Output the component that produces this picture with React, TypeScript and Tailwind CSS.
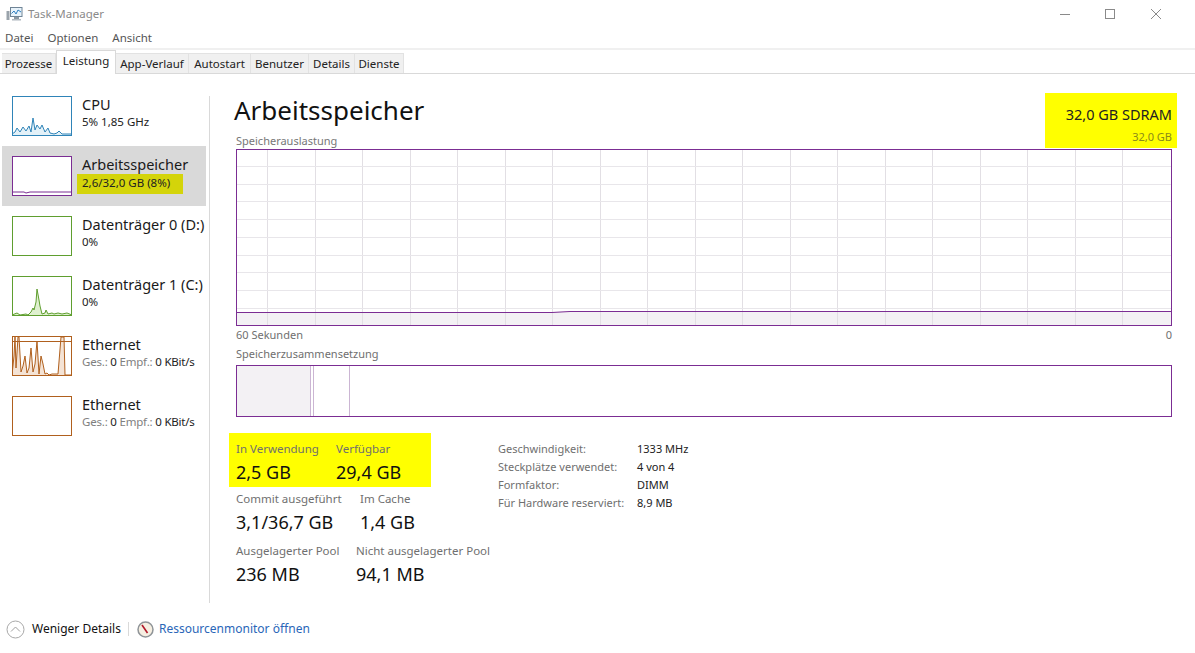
import React from "react";

const FONT = "font-['Noto_Sans','Open_Sans',sans-serif]";

function Spark({ color, fill, points, extra }: { color: string; fill: string; points?: string; extra?: React.ReactNode }) {
  return (
    <svg width="60" height="40" viewBox="0 0 60 40" className="shrink-0 bg-white block">
      {points && <polygon points={`0,39 ${points} 60,39`} fill={fill} stroke="none" />}
      {points && <polyline points={points} fill="none" stroke={color} strokeWidth="1" />}
      {extra}
      <rect x="0.5" y="0.5" width="59" height="39" fill="none" stroke={color} strokeWidth="1" />
    </svg>
  );
}

function SideItem({ selected, title, sub, spark }: { selected?: boolean; title: string; sub: React.ReactNode; spark: React.ReactNode }) {
  return (
    <div className={`flex h-[60px] w-[204px] pl-[10px] pt-[10px] gap-[10px] ${selected ? "bg-[#d9d9d9]" : ""}`}>
      {spark}
      <div className="flex flex-col whitespace-nowrap">
        <div className="text-[14.5px] leading-[20px] text-[#1a1a1a] -mt-[2px]">{title}</div>
        <div className="text-[11.5px] leading-[16px] text-[#222]">{sub}</div>
      </div>
    </div>
  );
}

function EthSub() {
  return (
    <span className="text-[11.5px] tracking-[-0.2px]">
      <span className="text-[#808080]">Ges.:</span> 0 <span className="text-[#808080]">Empf.:</span> 0 KBit/s
    </span>
  );
}

function Stat({ label, value, width }: { label: string; value: string; width: string }) {
  return (
    <div className={`${width} whitespace-nowrap`}>
      <div className="text-[11.5px] leading-[16px] text-[#6f6f6f]">{label}</div>
      <div className="text-[18px] leading-[26px] text-[#111] mt-[2px]">{value}</div>
    </div>
  );
}

const TABS: [string, string][] = [
  ["Prozesse", "w-[54px]"],
  ["Leistung", "w-[60px]"],
  ["App-Verlauf", "w-[73px]"],
  ["Autostart", "w-[62px]"],
  ["Benutzer", "w-[58px]"],
  ["Details", "w-[46px]"],
  ["Dienste", "w-[49px]"],
];

function MemoryGraph() {
  const vs = Array.from({ length: 19 }, (_, i) => 31.5 + i * 47.5);
  const hs = Array.from({ length: 9 }, (_, i) => 17.5 + i * 17.7);
  return (
    <svg width="936" height="177" viewBox="0 0 936 177" className="block">
      <polygon points="1,163 316,163 334,162 935,162 935,176 1,176" fill="#f3f1f4" />
      {vs.map((x) => <line key={x} x1={Math.floor(x) + 0.5} x2={Math.floor(x) + 0.5} y1="1" y2="176" stroke="#e2dfe4" />)}
      {hs.map((y) => <line key={y} y1={Math.floor(y) + 0.5} y2={Math.floor(y) + 0.5} x1="1" x2="935" stroke="#e8e6ea" />)}
      <polyline points="1,163.5 316,163.5 334,162.5 935,162.5" fill="none" stroke="#7b2d93" strokeWidth="1" />
      <rect x="0.5" y="0.5" width="935" height="176" fill="none" stroke="#7b2d93" />
    </svg>
  );
}

export default function App() {
  return (
    <div className={`${FONT} w-[1195px] h-[653px] bg-white flex flex-col overflow-hidden text-black`}>
      {/* Title bar */}
      <div className="h-[28px] flex items-center pl-[6px] shrink-0">
        <svg width="17" height="16" viewBox="0 0 17 16" className="shrink-0">
          <rect x="0.5" y="5" width="3" height="9" fill="#9aa3ab" />
          <rect x="4.5" y="1.5" width="11.5" height="9" fill="#e8f3fb" stroke="#6f8496" />
          <polyline points="5.5,7.5 8,5 10,8 12,4 15,6" fill="none" stroke="#2f7fc1" strokeWidth="1" />
          <rect x="8" y="11" width="5" height="2" fill="#8b98a3" />
          <rect x="6" y="13" width="9" height="1.5" fill="#b0b8bf" />
        </svg>
        <span className="ml-[5px] text-[11.5px] text-[#8a8a8a]">Task-Manager</span>
        <div className="ml-auto flex items-center">
          <svg width="118" height="12" viewBox="0 0 118 12" className="mr-[17px]">
            <line x1="0" x2="10" y1="6.5" y2="6.5" stroke="#8a8a8a" />
            <rect x="45.5" y="1.5" width="9" height="9" fill="none" stroke="#8a8a8a" />
            <path d="M91 1 L101 11 M101 1 L91 11" stroke="#8a8a8a" fill="none" />
          </svg>
        </div>
      </div>
      {/* Menu */}
      <div className="h-[20px] flex items-center gap-[14px] pl-[5px] text-[11.5px] text-[#555] shrink-0">
        <span>Datei</span><span>Optionen</span><span>Ansicht</span>
      </div>
      <div className="h-[2px] bg-[#f0f0f0] shrink-0" />
      {/* Tabs */}
      <div className="h-[24px] flex items-end pl-[2px] border-b border-[#d9d9d9] shrink-0">
        {TABS.map(([t, w]) =>
          t === "Leistung" ? (
            <div key={t} className={`${w} h-[24px] -mb-[1px] bg-white border border-b-0 border-[#d9d9d9] flex items-center justify-center text-[11.5px] text-[#222] pb-[3px] relative`}>{t}</div>
          ) : (
            <div key={t} className={`${w} h-[20px] bg-[#f0f0f0] border-r border-t border-[#e2e2e2] flex items-center justify-center text-[11.5px] text-[#222]`}>{t}</div>
          )
        )}
      </div>
      {/* Body */}
      <div className="flex-1 flex min-h-0">
        <div className="w-[204px] ml-[2px] pt-[12px] shrink-0 flex flex-col">
          <SideItem title="CPU" sub="5%  1,85 GHz" spark={<Spark color="#2f84b8" fill="#e3f1f8" points="0,38 3,36 5,32 8,36 11,31 14,35 17,30 19,36 21,22 23,34 25,29 28,33 30,29 33,36 36,32 38,37 42,38 45,37 47,35 50,38 60,38" />} />
          <SideItem selected title="Arbeitsspeicher" sub={<span className="inline-block bg-[#d4d40a] -ml-[5px] pl-[5px] w-[106px] h-[20px] leading-[18px]">2,6/32,0 GB (8%)</span>} spark={<Spark color="#7b2d93" fill="#ffffff" points="0,36 12,36 14,37 18,36 60,36" />} />
          <SideItem title="Datenträger 0 (D:)" sub="0%" spark={<Spark color="#5f9e2f" fill="#fff" />} />
          <SideItem title="Datenträger 1 (C:)" sub="0%" spark={<Spark color="#5f9e2f" fill="#dff0cf" points="0,39 5,37 8,39 14,38 16,39 19,36 21,32 22,34 24,26 25,13 27,24 28,30 30,38 33,37 34,34 36,38 40,37 42,38 46,37 50,38 55,37 60,39" />} />
          <SideItem title="Ethernet" sub={<EthSub />} spark={<Spark color="#b0601e" fill="#f4e3d5" points="0,39 2,20 3,1 4,32 6,1 7,1 9,36 11,30 13,20 15,37 17,32 19,12 21,36 23,28 25,5 27,38 29,20 31,28 33,38 35,37 37,39 40,38 43,38 46,38 49,1 52,1 53,39 60,39" extra={<line x1="0" x2="60" y1="5.5" y2="5.5" stroke="#b0601e" />} />} />
          <SideItem title="Ethernet" sub={<EthSub />} spark={<Spark color="#b0601e" fill="#fff" />} />
        </div>
        <div className="w-px h-[507px] mt-[22px] ml-[3px] bg-[#d9d9d9] shrink-0" />
        <div className="flex-1 pl-[26px] pr-[23px] min-w-0">
          {/* Header */}
          <div className="h-[75px] flex justify-between items-end">
            <div className="flex flex-col">
              <div className="text-[26px] leading-[36px] -ml-[2px] text-[#111] mb-[5px]">Arbeitsspeicher</div>
              <div className="text-[11px] leading-[16px] text-[#777]">Speicherauslastung</div>
            </div>
            <div className="w-[132px] h-[55px] -mr-[5px] mb-px bg-[#ffff00] flex flex-col items-end pr-[5px] pt-[10px]">
              <div className="text-[14.5px] leading-[22px] text-[#222]">32,0 GB SDRAM</div>
              <div className="text-[11px] leading-[16px] text-[#8a8a1a] mt-[4px]">32,0 GB</div>
            </div>
          </div>
          <MemoryGraph />
          <div className="flex justify-between text-[11px] leading-[16px] text-[#6f6f6f] mt-px"><span>60 Sekunden</span><span>0</span></div>
          <div className="text-[11px] leading-[16px] text-[#6f6f6f] mt-[3px]">Speicherzusammensetzung</div>
          {/* Composition */}
          <div className="h-[52px] mt-[3px] border border-[#7b2d93] flex">
            <div className="w-[73px] bg-[#f3f1f4]" />
            <div className="w-[4px] border-x border-[#cbb5d3]" />
            <div className="w-[36px] border-r border-[#cbb5d3]" />
          </div>
          {/* Stats */}
          <div className="flex mt-[16px]">
            <div className="w-[262px] shrink-0 flex flex-col">
              <div className="-ml-[7px] w-[202px] h-[54px] bg-[#ffff00] pl-[7px] pt-[8px] flex">
                <Stat label="In Verwendung" value="2,5 GB" width="w-[100px]" />
                <Stat label="Verfügbar" value="29,4 GB" width="w-[95px]" />
              </div>
              <div className="flex mt-[4px]">
                <Stat label="Commit ausgeführt" value="3,1/36,7 GB" width="w-[124px]" />
                <Stat label="Im Cache" value="1,4 GB" width="w-[100px]" />
              </div>
              <div className="flex mt-[8px]">
                <Stat label="Ausgelagerter Pool" value="236 MB" width="w-[120px]" />
                <Stat label="Nicht ausgelagerter Pool" value="94,1 MB" width="w-[130px]" />
              </div>
            </div>
            <div className="grid grid-cols-[139px_auto] auto-rows-[18px] text-[11px] leading-[18px] pt-[7px] self-start">
              <span className="text-[#6f6f6f]">Geschwindigkeit:</span><span className="text-[#222]">1333 MHz</span>
              <span className="text-[#6f6f6f]">Steckplätze verwendet:</span><span className="text-[#222]">4 von 4</span>
              <span className="text-[#6f6f6f]">Formfaktor:</span><span className="text-[#222]">DIMM</span>
              <span className="text-[#6f6f6f]">Für Hardware reserviert:</span><span className="text-[#222]">8,9 MB</span>
            </div>
          </div>
        </div>
      </div>
      {/* Footer */}
      <div className="h-[48px] shrink-0 flex items-center pl-[6px]">
        <svg width="19" height="19" viewBox="0 0 19 19" className="shrink-0">
          <circle cx="9.5" cy="9.5" r="8.5" fill="none" stroke="#a8a8a8" />
          <path d="M5 11.5 L9.5 7 L14 11.5" fill="none" stroke="#a0a0a0" />
        </svg>
        <span className="ml-[7px] text-[12px] text-[#111]">Weniger Details</span>
        <div className="w-px h-[14px] bg-[#d9d9d9] ml-[7px]" />
        <svg width="17" height="17" viewBox="0 0 17 17" className="ml-[8px] shrink-0">
          <circle cx="8.5" cy="8.5" r="7.5" fill="#f6efe2" stroke="#8f9498" strokeWidth="1.5" />
          <path d="M5 4 L10.5 12" stroke="#b0182a" strokeWidth="1.6" />
        </svg>
        <span className="ml-[5px] text-[12px] text-[#2a66b8]">Ressourcenmonitor öffnen</span>
      </div>
    </div>
  );
}
